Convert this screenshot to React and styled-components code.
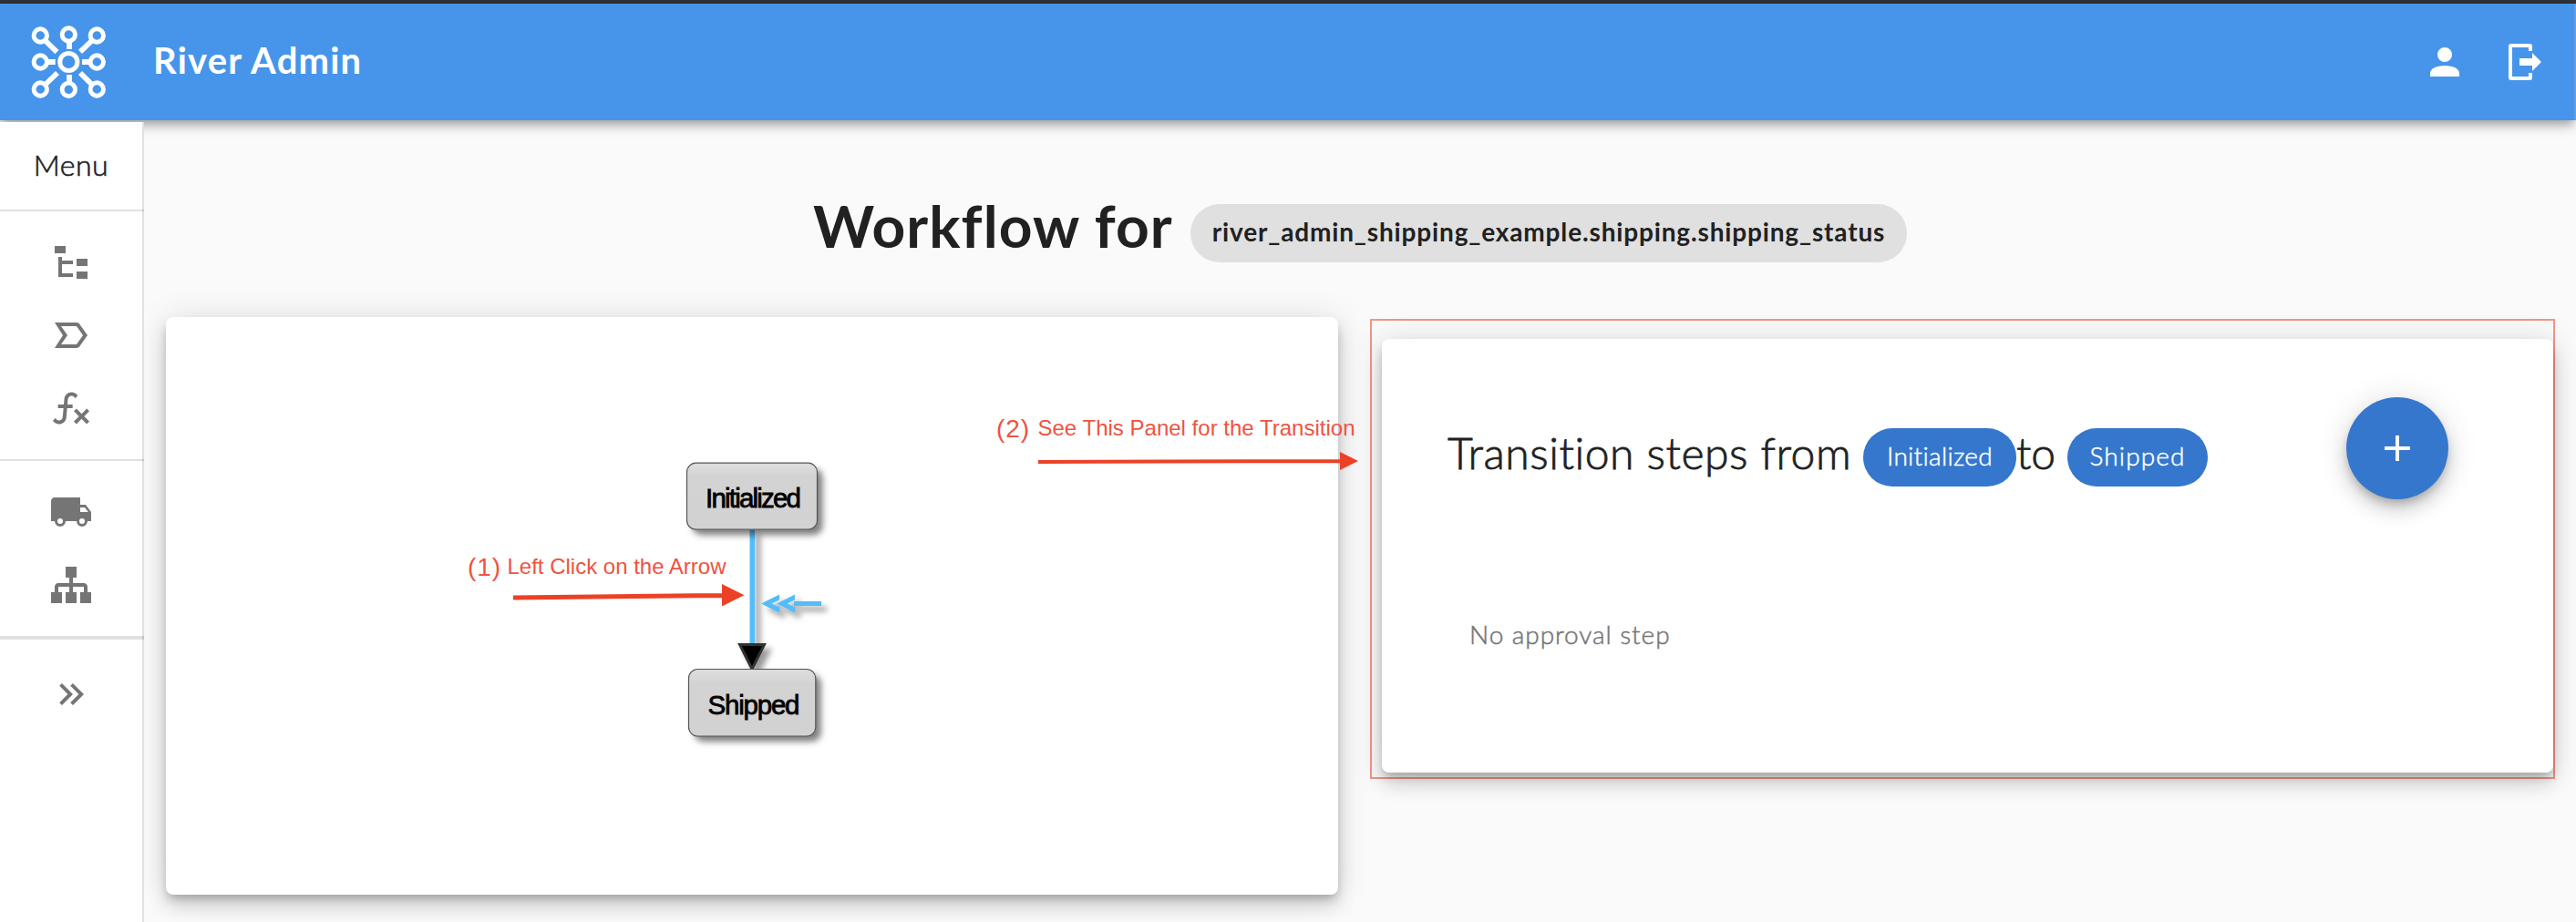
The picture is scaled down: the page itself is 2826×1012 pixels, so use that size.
import React from "react";
import styled, { createGlobalStyle } from "styled-components";

const GlobalStyle = createGlobalStyle`
  * { box-sizing: border-box; }
  body {
    margin: 0;
    background: #fafafa;
    color: #212121;
    font-family: Lato, "Open Sans", sans-serif;
    overflow: hidden;
  }
`;

const elevation4 =
  "0 4px 8px -2px rgba(0,0,0,.2), 0 8px 10px 0 rgba(0,0,0,.14), 0 2px 20px 0 rgba(0,0,0,.12)";
const elevation6 =
  "0 6px 10px -2px rgba(0,0,0,.2), 0 12px 20px 0 rgba(0,0,0,.14), 0 2px 36px 0 rgba(0,0,0,.12)";

const Page = styled.div`
  position: relative;
  width: 2826px;
  height: 1012px;
  display: flex;
  flex-direction: column;
  overflow: hidden;
`;

const WindowEdge = styled.div`
  height: 4px;
  background: #303336;
  border-bottom: 1px solid #26313f;
  flex: none;
`;

const Header = styled.header`
  position: relative;
  z-index: 1;
  flex: none;
  width: 2824px;
  height: 128px;
  display: flex;
  align-items: center;
  padding: 0 32px;
  background: #4695eb;
  color: #fff;
  box-shadow: ${elevation4};
  &::after {
    content: "";
    position: absolute;
    left: 100%;
    top: 0;
    width: 2px;
    height: 100%;
    background: #5f9fe2;
  }
`;

const Brand = styled.h1`
  margin: 0 auto 5px 49px;
  font-size: 40px;
  line-height: 48px;
  font-weight: 700;
  letter-spacing: 1.2px;
`;

const HeaderActions = styled.nav`
  display: flex;
  gap: 40px;
  margin-right: -2px;
`;

const Body = styled.div`
  display: flex;
  flex: 1;
`;

const Sidebar = styled.aside`
  position: relative;
  z-index: 2;
  width: 158px;
  margin-top: 2px;
  background: #fff;
  border-right: 2px solid #e0e0e0;
  flex: none;
`;

const MenuTitle = styled.div`
  height: 96px;
  padding-bottom: 4px;
  display: flex;
  align-items: center;
  justify-content: center;
  font-size: 32px;
  font-weight: 300;
  letter-spacing: 0.5px;
  -webkit-text-stroke: 0.6px currentColor;
`;

const MenuGroup = styled.div`
  display: flex;
  flex-direction: column;
  align-items: center;
  gap: 32px;
  margin-right: -2px;
  padding: ${(p) => p.$top}px 2px ${(p) => p.$bottom}px 0;
  border-top: ${(p) => p.$rule}px solid rgba(0, 0, 0, 0.12);
  color: #757575;
`;

const Icon = styled.svg`
  display: block;
  width: 48px;
  height: 48px;
  fill: currentColor;
`;

const Main = styled.main`
  flex: 1;
  display: flex;
  flex-direction: column;
`;

const TitleRow = styled.div`
  height: 216px;
  padding: 92px 0 0 734px;
  display: flex;
`;

const Title = styled.h2`
  width: 414px;
  margin: -24px 0 0;
  font-size: 64px;
  line-height: 96px;
  font-weight: 700;
  letter-spacing: 1.1px;
  white-space: nowrap;
`;

const Chip = styled.span`
  flex: none;
  display: flex;
  align-items: center;
  justify-content: center;
  width: ${(p) => p.$width}px;
  height: 64px;
  padding-bottom: 5px;
  border-radius: 32px;
  font-size: 28px;
  white-space: nowrap;
`;

const NeutralChip = styled(Chip)`
  background: #e0e0e0;
  font-weight: 700;
  letter-spacing: 0.85px;
`;

const StateChip = styled(Chip)`
  background: #3577cc;
  color: #fff;
  font-weight: 300;
  letter-spacing: ${(p) => p.$tracking}px;
  -webkit-text-stroke: 0.5px currentColor;
`;

const Panels = styled.div`
  display: flex;
  align-items: flex-start;
  padding-left: 24px;
`;

const Card = styled.section`
  background: #fff;
  border-radius: 8px;
  box-shadow: ${elevation6};
`;

const DiagramCard = styled(Card)`
  width: 1286px;
  height: 634px;
`;

const Canvas = styled.svg`
  display: block;
  overflow: visible;
  font-family: "Liberation Sans", Arial, sans-serif;
`;

const Highlight = styled.div`
  width: 1300px;
  height: 505px;
  margin: 2px 0 0 35px;
  padding: 20px 0 0 11px;
  border: 2px solid rgba(236, 64, 36, 0.55);
`;

const StepsCard = styled(Card)`
  width: 1285px;
  height: 476px;
  padding: 64px 115px 0 72px;
`;

const StepsHeader = styled.div`
  display: flex;
  height: 112px;
`;

const StepsTitle = styled.h3`
  flex: 1;
  display: flex;
  margin: 34px 0 0;
  font-size: 48px;
  line-height: 64px;
  font-weight: 300;
`;

const Word = styled.span`
  width: ${(p) => p.$width}px;
  margin-top: -5px;
  letter-spacing: ${(p) => p.$tracking}px;
  white-space: nowrap;
  -webkit-text-stroke: 0.8px currentColor;
`;

const AddButton = styled.button`
  width: 112px;
  height: 112px;
  border: 0;
  padding: 0;
  border-radius: 50%;
  display: grid;
  place-items: center;
  background: #3577cc;
  color: #fff;
  box-shadow: ${elevation6};
`;

const EmptyNote = styled.p`
  margin: 131px 0 0 24px;
  font-size: 28px;
  line-height: 34px;
  font-weight: 300;
  letter-spacing: 0.95px;
  color: #757575;
  -webkit-text-stroke: 0.5px currentColor;
`;

const Annotations = styled.svg`
  position: absolute;
  left: 0;
  top: 0;
  z-index: 3;
  pointer-events: none;
  fill: #ec4126;
  font-family: "Liberation Sans", Arial, sans-serif;
`;

const icons = {
  account:
    "M12,4A4,4 0 0,1 16,8A4,4 0 0,1 12,12A4,4 0 0,1 8,8A4,4 0 0,1 12,4M12,14C16.42,14 20,15.79 20,18V20H4V18C4,15.79 7.58,14 12,14Z",
  exit:
    "M4.5 2H14.5A1.5 1.5 0 0 1 16 3.5V6H14V4H5V20H14V18H16V20.5A1.5 1.5 0 0 1 14.5 22H4.5A1.5 1.5 0 0 1 3 20.5V3.5A1.5 1.5 0 0 1 4.5 2ZM9 10H16V7L21 12L16 17V14H9Z",
  tree:
    "M3,3H9V7H3V3M15,10H21V14H15V10M15,17H21V21H15V17M13,13H7V18H13V20H7L5,20V9H7V11H13V13Z",
  label:
    "M6.5 17H15L18.5 12L15 7H6.5L10 12L6.5 17M15 19H3L7.5 12L3 5H15C15.69 5 16.23 5.3 16.64 5.86L21 12L16.64 18.14C16.23 18.7 15.69 19 15 19Z",
  fx:
    "M12.42,5.29C11.32,5.19 10.35,6 10.25,7.11L10,10H12.82V12H9.82L9.38,17.07C9.18,19.27 7.24,20.9 5.04,20.7C3.79,20.59 2.66,19.9 2,18.83L3.5,17.33C3.83,18.38 4.96,18.97 6,18.63C6.78,18.39 7.33,17.7 7.4,16.89L7.82,12H4.82V10H8L8.27,6.93C8.46,4.73 10.39,3.1 12.6,3.28C13.86,3.39 15,4.09 15.66,5.17L14.16,6.67C13.91,5.9 13.23,5.36 12.42,5.29M22,13.65L20.59,12.24L17.76,15.07L14.93,12.24L13.5,13.65L16.35,16.5L13.5,19.31L14.93,20.72L17.76,17.89L20.59,20.72L22,19.31L19.17,16.5L22,13.65Z",
  truck:
    "M18,18.5A1.5,1.5 0 0,0 19.5,17A1.5,1.5 0 0,0 18,15.5A1.5,1.5 0 0,0 16.5,17A1.5,1.5 0 0,0 18,18.5M19.5,9.5H17V12H21.46L19.5,9.5M6,18.5A1.5,1.5 0 0,0 7.5,17A1.5,1.5 0 0,0 6,15.5A1.5,1.5 0 0,0 4.5,17A1.5,1.5 0 0,0 6,18.5M20,8L23,12V17H21A3,3 0 0,1 18,20A3,3 0 0,1 15,17H9A3,3 0 0,1 6,20A3,3 0 0,1 3,17H1V6C1,4.89 1.89,4 3,4H17V8H20Z",
  sitemap:
    "M9,2V8H11V11H5C3.89,11 3,11.89 3,13V16H1V22H7V16H5V13H11V16H9V22H15V16H13V13H19V16H17V22H23V16H21V13C21,11.89 20.11,11 19,11H13V8H15V2H9Z",
  expand:
    "M5.59,7.41L7,6L13,12L7,18L5.59,16.59L10.17,12L5.59,7.41M11.59,7.41L13,6L19,12L13,18L11.59,16.59L16.17,12L11.59,7.41Z",
  plus: "M19,13H13V19H11V13H5V11H11V5H13V11H19V13Z",
};

const Glyph = ({ name }) => (
  <Icon viewBox="0 0 24 24">
    <path d={icons[name]} />
  </Icon>
);

const menuGroups = [
  { top: 32, bottom: 32, rule: 2, names: ["tree", "label", "fx"] },
  { top: 32, bottom: 32, rule: 2, names: ["truck", "sitemap"] },
  { top: 36, bottom: 0, rule: 4, names: ["expand"] },
];

const rings = [
  [12.3, 12], [43.3, 11], [74.3, 12],
  [12.3, 41], [74.3, 41],
  [12.3, 71], [43.3, 71.3], [74.3, 71],
];

const Logo = () => (
  <svg width="87" height="82" viewBox="0 0 87 82" fill="none" stroke="#fff">
    {rings.map(([x, y]) => (
      <circle key={`${x}-${y}`} cx={x} cy={y} r="7.2" strokeWidth="4.9" />
    ))}
    <circle cx="43.3" cy="41" r="9.6" strokeWidth="5" />
    <path
      strokeWidth="5.8"
      d="M44 19V27M44 55V63M21 41H28.7M58 41H66M18 18L30.5 30.2M68.5 18L56 29.8M18 65.5L31 53M68.5 65.5L56 53"
    />
  </svg>
);

const Node = ({ x, y, width, height, label, textX, textWidth, baseline }) => (
  <g>
    <rect x={x} y={y} width={width} height={height} rx="10" fill="#d3d3d3" filter="url(#drop)" />
    <rect x={x + 1} y={y + 1} width={width - 2} height={height - 2} rx="9" fill="url(#bevel)" />
    <rect x={x} y={y} width={width} height={height} rx="10" fill="none" stroke="#555" strokeWidth="1.2" />
    <text
      x={textX}
      y={baseline}
      fontSize="29.5"
      textLength={textWidth}
      fill="#000"
      stroke="#000"
      strokeWidth="0.8"
    >
      {label}
    </text>
  </g>
);

const Diagram = () => (
  <Canvas width="1286" height="634" viewBox="182 348 1286 634">
    <defs>
      <filter id="drop" x="-20%" y="-20%" width="150%" height="160%">
        <feDropShadow dx="6" dy="6" stdDeviation="3.5" floodColor="#000" floodOpacity="0.5" />
      </filter>
      <filter id="edgeDrop" filterUnits="userSpaceOnUse" x="790" y="560" width="150" height="200">
        <feDropShadow dx="6" dy="6" stdDeviation="3" floodColor="#000" floodOpacity="0.4" />
      </filter>
      <linearGradient id="bevel" x1="0" y1="0" x2="0" y2="1">
        <stop offset="0" stopColor="#dedede" />
        <stop offset="0.2" stopColor="#d3d3d3" />
        <stop offset="1" stopColor="#d2d2d2" />
      </linearGradient>
    </defs>
    <g filter="url(#edgeDrop)">
      <path d="M825.3 581V708" stroke="#53bdfb" strokeWidth="5.6" />
      <path d="M811.5 707.5H838.5L825 734.5Z" fill="#000" stroke="#333" strokeWidth="3" />
      <path
        fill="#53bdfb"
        d="M835 662.5L855 652.6V658.6L846.5 662.5L855 666.6V672.8ZM852.3 662.5L872 652.6V658.6L863.8 662.5L872 666.6V672.8ZM871 660H901V665H871Z"
      />
    </g>
    <Node x={753.5} y={508.2} width={143} height={73} label="Initialized" textX={774} textWidth={105} baseline={557} />
    <Node x={755.5} y={734.5} width={139.3} height={73.5} label="Shipped" textX={776.5} textWidth={101} baseline={784} />
  </Canvas>
);

const Notes = () => (
  <Annotations width="2826" height="1012" viewBox="0 0 2826 1012">
    <g fill="#ef5340">
      <text x="513" y="632.3" fontSize="28" textLength="36">(1)</text>
      <text x="556.5" y="630" fontSize="24" textLength="240">Left Click on the Arrow</text>
      <text x="1093" y="480" fontSize="28" textLength="36">(2)</text>
      <text x="1138.5" y="478.3" fontSize="24" textLength="348">See This Panel for the Transition</text>
    </g>
    <path d="M563 653.6L793 651V656L563 658.6ZM792 641L816.5 653.2L792 665.4Z" />
    <path d="M1139 505L1471 504V508L1139 509ZM1470 496L1490 506L1470 516Z" />
  </Annotations>
);

export default function App() {
  return (
    <Page>
      <GlobalStyle />
      <WindowEdge />
      <Header>
        <Logo />
        <Brand>River Admin</Brand>
        <HeaderActions>
          <Glyph name="account" />
          <Glyph name="exit" />
        </HeaderActions>
      </Header>
      <Body>
        <Sidebar>
          <MenuTitle>Menu</MenuTitle>
          {menuGroups.map((g) => (
            <MenuGroup key={g.names[0]} $top={g.top} $bottom={g.bottom} $rule={g.rule}>
              {g.names.map((n) => (
                <Glyph key={n} name={n} />
              ))}
            </MenuGroup>
          ))}
        </Sidebar>
        <Main>
          <TitleRow>
            <Title>Workflow for</Title>
            <NeutralChip $width={786}>
              river_admin_shipping_example.shipping.shipping_status
            </NeutralChip>
          </TitleRow>
          <Panels>
            <DiagramCard>
              <Diagram />
            </DiagramCard>
            <Highlight>
              <StepsCard>
                <StepsHeader>
                  <StepsTitle>
                    <Word $width={456} $tracking={0.55}>Transition steps from</Word>
                    <StateChip $width={168} $tracking={0.3}>Initialized</StateChip>
                    <Word $width={56} $tracking={0}>to</Word>
                    <StateChip $width={154} $tracking={1.1}>Shipped</StateChip>
                  </StepsTitle>
                  <AddButton>
                    <Glyph name="plus" />
                  </AddButton>
                </StepsHeader>
                <EmptyNote>No approval step</EmptyNote>
              </StepsCard>
            </Highlight>
          </Panels>
        </Main>
      </Body>
      <Notes />
    </Page>
  );
}
